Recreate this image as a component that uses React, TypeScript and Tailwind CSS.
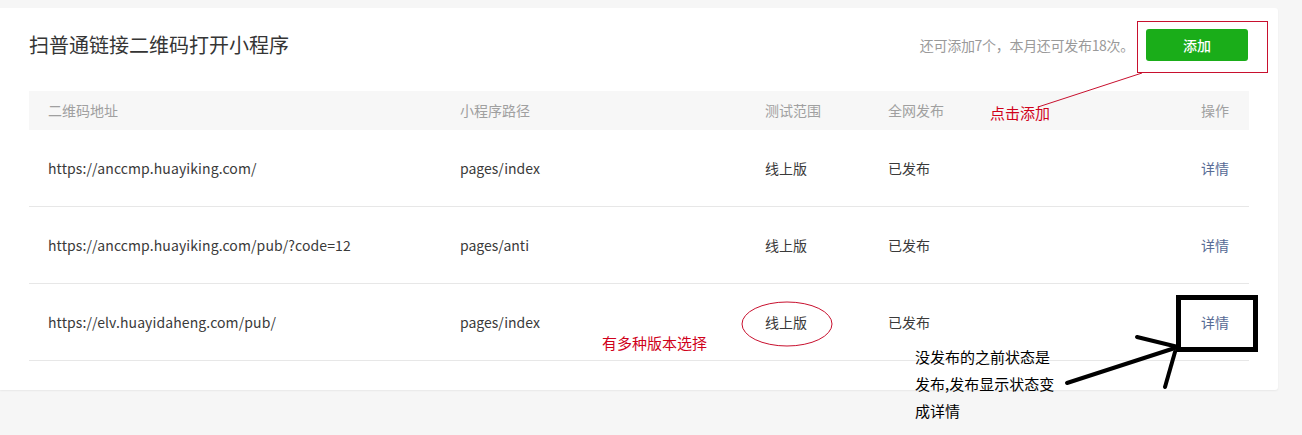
import React from "react";

const rows = [
  { url: "https://anccmp.huayiking.com/", path: "pages/index", scope: "线上版", status: "已发布" },
  { url: "https://anccmp.huayiking.com/pub/?code=12", path: "pages/anti", scope: "线上版", status: "已发布" },
  { url: "https://elv.huayidaheng.com/pub/", path: "pages/index", scope: "线上版", status: "已发布" },
];

const cols = "grid grid-cols-[412px_305px_123px_1fr_120px] items-center";

const Annotations = () => (
  <>
    <svg className="pointer-events-none absolute left-0 top-0" width="1302" height="435">
      <rect x="1137.5" y="21.5" width="130" height="51" fill="none" stroke="#c8102e" strokeWidth="1" />
      <line x1="1142" y1="73" x2="1038" y2="107" stroke="#c8102e" strokeWidth="1" />
      <ellipse cx="787" cy="324" rx="45" ry="22" fill="none" stroke="#c8102e" strokeWidth="1" />
      <rect x="1178.5" y="297.5" width="77" height="52" fill="none" stroke="#000" strokeWidth="5" />
      <line x1="1067" y1="383" x2="1178" y2="347" stroke="#000" strokeWidth="4" strokeLinecap="round" />
      <line x1="1137" y1="337" x2="1178" y2="347" stroke="#000" strokeWidth="4" strokeLinecap="round" />
      <line x1="1175" y1="352" x2="1165" y2="387" stroke="#000" strokeWidth="4" strokeLinecap="round" />
    </svg>
    <div className="absolute left-[990px] top-[103px] text-[15px] leading-[20px] text-[#d0021b]">点击添加</div>
    <div className="absolute left-[602px] top-[333px] text-[15px] leading-[20px] text-[#d0021b]">有多种版本选择</div>
    <div className="absolute left-[915px] top-[343px] text-[15px] leading-[27px] text-black">
      <div>没发布的之前状态是</div>
      <div>发布,发布显示状态变</div>
      <div>成详情</div>
    </div>
  </>
);

export default function App() {
  return (
    <div
      className="relative h-[435px] w-[1302px] overflow-hidden bg-[#f6f6f6] pt-[8px]"
      style={{ fontFamily: '"Noto Sans CJK SC", "Noto Sans", sans-serif' }}
    >
      <div className="w-[1278px] rounded-r-[3px] bg-white px-[29px] pb-[29px] pt-[21px] shadow-[0_1px_2px_rgba(0,0,0,0.06)]">
        <div className="flex items-center justify-between">
          <h2 className="text-[20px] font-normal leading-[32px] text-[#353535]">扫普通链接二维码打开小程序</h2>
          <div className="flex items-center gap-[12px]">
            <span className="text-[14px] tracking-[-0.3px] text-[#9a9a9a]">还可添加7个，本月还可发布18次。</span>
            <button className="mr-[1px] h-[32px] w-[102px] rounded-[3px] bg-[#1aad19] text-[14px] font-medium text-white">添加</button>
          </div>
        </div>

        <div className="mt-[30px] text-[14px]">
          <div className={`${cols} h-[39px] bg-[#f7f7f7] text-[#a0a0a0]`}>
            <div className="px-[19px]">二维码地址</div>
            <div className="px-[19px]">小程序路径</div>
            <div className="px-[19px]">测试范围</div>
            <div className="px-[19px]">全网发布</div>
            <div className="px-[20px] text-right">操作</div>
          </div>
          {rows.map((r, i) => (
            <div key={i} className={`${cols} h-[77px] border-b border-[#e7e7e7] text-[#3a3a3a]`}>
              <div className="px-[19px] tracking-[0.1px]">{r.url}</div>
              <div className="px-[19px]">{r.path}</div>
              <div className="px-[19px]">{r.scope}</div>
              <div className="px-[19px]">{r.status}</div>
              <div className="px-[20px] text-right text-[#576b95]">详情</div>
            </div>
          ))}
        </div>
      </div>
      <Annotations />
    </div>
  );
}
